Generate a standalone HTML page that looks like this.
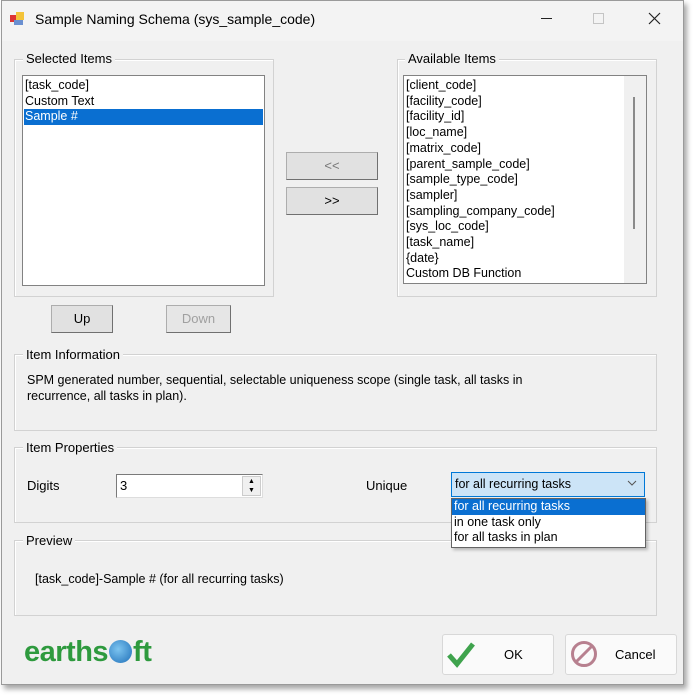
<!DOCTYPE html><html><head><style>
*{box-sizing:border-box;margin:0;padding:0}
body{width:699px;height:695px;background:#fff;font:12px "Liberation Sans",sans-serif;color:#000;position:relative;overflow:hidden}
.a{position:absolute}
.win{left:1px;top:0;width:683px;height:685px;background:#f0f0f0;border:1px solid #9a9a9a;box-shadow:3px 4px 5px rgba(0,0,0,.35)}
.tb{left:0;top:0;width:681px;height:40px;background:#f3f3f3}
.grp{border:1px solid #d2d2d2;box-shadow:inset 1px 1px 0 #fff}
.lbl{background:#f0f0f0;padding:0 3px;font-size:13px;line-height:14px}
.lb{background:#fff;border:1px solid #828282;line-height:15.7px;font-size:12.5px;padding:2px 2px}
.btn{background:#e1e1e1;border:1px solid #adadad;border-right-color:#707070;border-bottom-color:#707070;text-align:center;font-size:13px}
</style></head><body>
<div class="a win">
<div class="a tb"></div>
</div>
<svg class="a" style="left:10px;top:11px" width="16" height="16"><rect x="0" y="4" width="7" height="7" fill="#d33"/><rect x="6" y="1" width="8" height="8" fill="#f3c338"/><rect x="4" y="9" width="9" height="5" fill="#6a8fd0"/></svg>
<div class="a" style="left:35px;top:11px;font-size:14px">Sample Naming Schema (sys_sample_code)</div>
<div class="a" style="left:541px;top:18px;width:11px;height:1px;background:#222"></div>
<div class="a" style="left:593px;top:13px;width:11px;height:11px;border:1px solid #c4c4c4"></div>
<svg class="a" style="left:648px;top:12px" width="13" height="13"><path d="M1 1L12 12M12 1L1 12" stroke="#222" stroke-width="1.2"/></svg>

<div class="a grp" style="left:14px;top:59px;width:260px;height:238px"></div>
<div class="a lbl" style="left:23px;top:52px">Selected Items</div>
<div class="a lb" style="left:22px;top:75px;width:243px;height:211px">
<div>[task_code]</div><div>Custom Text</div><div style="background:#0a6fd1;color:#fff;margin:0 -1px;padding-left:1px">Sample #</div></div>

<div class="a grp" style="left:397px;top:59px;width:260px;height:238px"></div>
<div class="a lbl" style="left:405px;top:52px">Available Items</div>
<div class="a lb" style="left:403px;top:75px;width:244px;height:209px">
<div>[client_code]</div><div>[facility_code]</div><div>[facility_id]</div><div>[loc_name]</div><div>[matrix_code]</div><div>[parent_sample_code]</div><div>[sample_type_code]</div><div>[sampler]</div><div>[sampling_company_code]</div><div>[sys_loc_code]</div><div>[task_name]</div><div>{date}</div><div>Custom DB Function</div></div>
<div class="a" style="left:624px;top:76px;width:22px;height:207px;background:#f0f0f0"></div>
<div class="a" style="left:633px;top:97px;width:2px;height:132px;background:#8a8a8a"></div>

<div class="a btn" style="left:286px;top:152px;width:92px;height:28px;line-height:26px;color:#777">&lt;&lt;</div>
<div class="a btn" style="left:286px;top:187px;width:92px;height:28px;line-height:26px">&gt;&gt;</div>
<div class="a btn" style="left:51px;top:305px;width:62px;height:28px;line-height:26px">Up</div>
<div class="a btn" style="left:166px;top:305px;width:65px;height:28px;line-height:26px;color:#a0a0a0;background:#e6e6e6">Down</div>

<div class="a grp" style="left:14px;top:354px;width:643px;height:77px"></div>
<div class="a lbl" style="left:23px;top:348px">Item Information</div>
<div class="a" style="left:27px;top:372px;font-size:12.5px;line-height:16px;width:545px">SPM generated number, sequential, selectable uniqueness scope (single task, all tasks in recurrence, all tasks in plan).</div>

<div class="a grp" style="left:14px;top:447px;width:643px;height:76px"></div>
<div class="a lbl" style="left:23px;top:441px">Item Properties</div>
<div class="a grp" style="left:14px;top:540px;width:643px;height:76px"></div>
<div class="a lbl" style="left:23px;top:534px">Preview</div>
<div class="a" style="left:35px;top:572px;font-size:12.5px">[task_code]-Sample # (for all recurring tasks)</div>

<div class="a" style="left:27px;top:478px;font-size:13px">Digits</div>
<div class="a" style="left:116px;top:474px;width:147px;height:24px;background:#fff;border:1px solid #7a7a7a;border-right-color:#ddd;border-bottom-color:#ddd;padding:3px 3px;font-size:13px">3</div>
<div class="a" style="left:242px;top:476px;width:19px;height:20px;background:#f0f0f0;border:1px solid #ccc;font-size:7px;line-height:9px;text-align:center">▲<br>▼</div>
<div class="a" style="left:366px;top:478px;font-size:13px">Unique</div>
<div class="a" style="left:451px;top:472px;width:194px;height:25px;background:#cce4f7;border:1px solid #0078d7;padding:4px 3px;font-size:12.5px">for all recurring tasks</div>
<svg class="a" style="left:627px;top:480px" width="10" height="7"><path d="M1 1L5 5L9 1" fill="none" stroke="#555"/></svg>
<div class="a" style="left:451px;top:498px;width:195px;height:50px;background:#fff;border:1px solid #646464;font-size:12.5px;line-height:15.6px;box-shadow:2px 2px 3px rgba(0,0,0,.25);overflow:hidden;z-index:5">
<div style="background:#0a6fd1;color:#fff;padding-left:2px;height:15.6px">for all recurring tasks</div><div style="padding-left:2px;height:15.6px">in one task only</div><div style="padding-left:2px;height:15.6px">for all tasks in plan</div></div>

<div class="a" style="left:24px;top:636px;font:bold 29px 'Liberation Sans',sans-serif;color:#2e9a3e;letter-spacing:-0.5px;transform:scaleX(1.0);transform-origin:left">earths<span style="display:inline-block;width:23px;height:23px;border-radius:50%;background:radial-gradient(circle at 40% 40%,#7cc4f0,#1f6fb8);vertical-align:-2px;margin:0 1px"></span>ft</div>

<div class="a" style="left:442px;top:634px;width:112px;height:41px;background:#fafafa;border:1px solid #d8d8d8;border-radius:3px"></div>
<svg class="a" style="left:446px;top:641px" width="30" height="27"><path d="M3 14L11 23L27 3" fill="none" stroke="#3fa34d" stroke-width="5"/></svg>
<div class="a" style="left:504px;top:647px;font-size:13px">OK</div>
<div class="a" style="left:565px;top:634px;width:112px;height:41px;background:#fafafa;border:1px solid #d8d8d8;border-radius:3px"></div>
<svg class="a" style="left:570px;top:640px" width="28" height="28"><circle cx="14" cy="14" r="11.5" fill="none" stroke="#b7808f" stroke-width="3"/><path d="M6 22L22 6" stroke="#b7808f" stroke-width="3"/></svg>
<div class="a" style="left:615px;top:647px;font-size:13px">Cancel</div>
</body></html>
